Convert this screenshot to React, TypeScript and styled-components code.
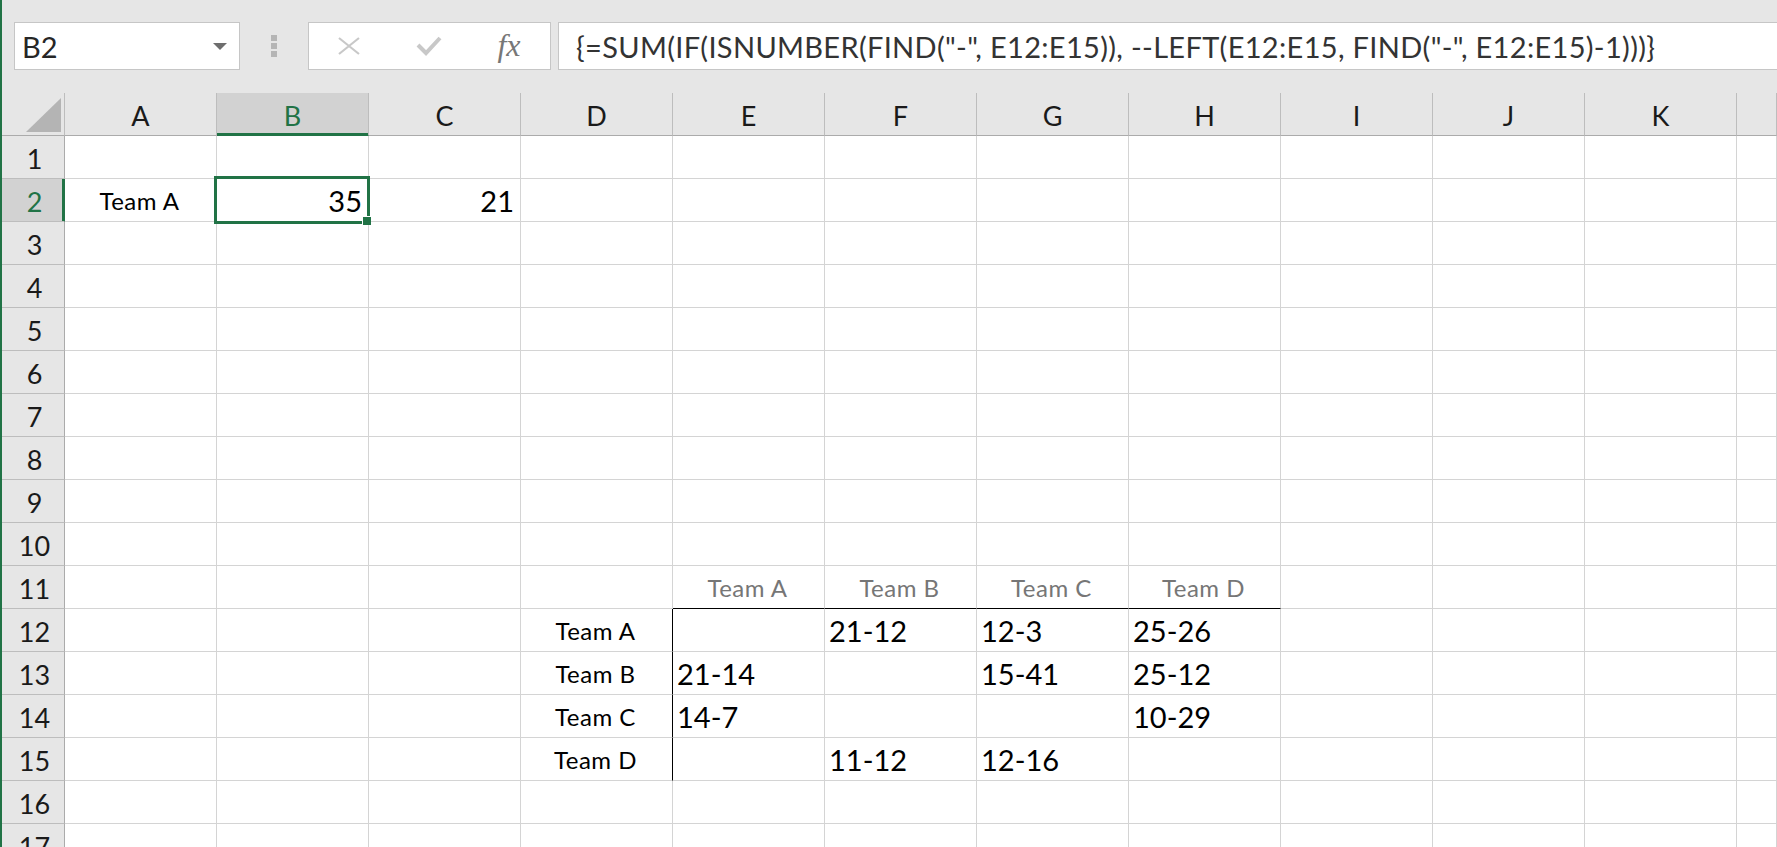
import React from "react";
import styled, { createGlobalStyle } from "styled-components";

const GREEN = "#217346";
const GRID_LINE = "#d4d4d4";

type Kind = "label" | "heading" | "number" | "score";

const COLUMNS = ["A", "B", "C", "D", "E", "F", "G", "H", "I", "J", "K"];
const ROWS = Array.from({ length: 17 }, (_, i) => i + 1);
const ACTIVE = { col: "B", row: 2 };

const CELLS: Record<string, { text: string; kind: Kind }> = {
    A2: { text: "Team A", kind: "label" },
    B2: { text: "35", kind: "number" },
    C2: { text: "21", kind: "number" },
    E11: { text: "Team A", kind: "heading" },
    F11: { text: "Team B", kind: "heading" },
    G11: { text: "Team C", kind: "heading" },
    H11: { text: "Team D", kind: "heading" },
    D12: { text: "Team A", kind: "label" },
    F12: { text: "21-12", kind: "score" },
    G12: { text: "12-3", kind: "score" },
    H12: { text: "25-26", kind: "score" },
    D13: { text: "Team B", kind: "label" },
    E13: { text: "21-14", kind: "score" },
    G13: { text: "15-41", kind: "score" },
    H13: { text: "25-12", kind: "score" },
    D14: { text: "Team C", kind: "label" },
    E14: { text: "14-7", kind: "score" },
    H14: { text: "10-29", kind: "score" },
    D15: { text: "Team D", kind: "label" },
    F15: { text: "11-12", kind: "score" },
    G15: { text: "12-16", kind: "score" },
};

// the results table has a thin black edge on its top and left side
const TABLE_LEFT_EDGE = new Set(["D12", "D13", "D14", "D15"]);
const TABLE_TOP_EDGE = new Set(["E11", "F11", "G11", "H11"]);

const FORMULA = '{=SUM(IF(ISNUMBER(FIND("-", E12:E15)), --LEFT(E12:E15, FIND("-", E12:E15)-1)))}';

const App: React.FunctionComponent = () => {
    return (
        <Frame>
            <GlobalStyle />
            <Toolbar>
                <NameBox>
                    <span>B2</span>
                    <Caret />
                </NameBox>
                <Grip>
                    <i />
                    <i />
                    <i />
                </Grip>
                <ButtonBox>
                    <ToolButton>
                        <svg width="22" height="18" viewBox="0 0 22 18">
                            <path d="M1 1 L21 17 M21 1 L1 17" stroke="#c8c8c8" strokeWidth="2.2" fill="none" />
                        </svg>
                    </ToolButton>
                    <ToolButton>
                        <svg width="26" height="20" viewBox="0 0 26 20">
                            <path d="M2 9 L10 17 L24 2" stroke="#c8c8c8" strokeWidth="4" fill="none" />
                        </svg>
                    </ToolButton>
                    <ToolButton>
                        <Fx>fx</Fx>
                    </ToolButton>
                </ButtonBox>
                <FormulaBox>{FORMULA}</FormulaBox>
            </Toolbar>

            <Sheet>
                <Corner>
                    <CornerMark />
                </Corner>
                {COLUMNS.map((col) => (
                    <ColumnHeader key={col} $active={col === ACTIVE.col}>
                        {col}
                    </ColumnHeader>
                ))}
                <ColumnHeader $active={false} />

                {ROWS.map((row) => (
                    <React.Fragment key={row}>
                        <RowHeader $active={row === ACTIVE.row}>{row}</RowHeader>
                        {COLUMNS.map((col) => {
                            const ref = `${col}${row}`;
                            const cell = CELLS[ref];
                            const isActive = col === ACTIVE.col && row === ACTIVE.row;
                            return (
                                <Cell
                                    key={ref}
                                    $kind={cell?.kind ?? "label"}
                                    $edgeRight={TABLE_LEFT_EDGE.has(ref)}
                                    $edgeBottom={TABLE_TOP_EDGE.has(ref)}
                                >
                                    {cell && <Value $kind={cell.kind}>{cell.text}</Value>}
                                    {isActive && (
                                        <>
                                            <Selection />
                                            <FillHandle />
                                        </>
                                    )}
                                </Cell>
                            );
                        })}
                        <Cell $kind="label" $edgeRight={false} $edgeBottom={false} />
                    </React.Fragment>
                ))}
            </Sheet>
        </Frame>
    );
};

const GlobalStyle = createGlobalStyle`
    html, body {
        margin: 0;
        padding: 0;
        background: #ffffff;
    }
    body {
        font-family: Lato, "Liberation Sans", sans-serif;
        overflow: hidden;
    }
`;

const Frame = styled.div`
    width: 1777px;
    height: 847px;
    overflow: hidden;
    box-sizing: border-box;
    border-left: 2px solid ${GREEN};
    background: #e6e6e6;
    display: flex;
    flex-direction: column;
`;

const Toolbar = styled.div`
    flex: none;
    height: 93px;
    box-sizing: border-box;
    padding: 22px 0 0 12px;
    display: flex;
    align-items: flex-start;
    overflow: hidden;
`;

const NameBox = styled.div`
    flex: none;
    width: 226px;
    height: 48px;
    box-sizing: border-box;
    background: #ffffff;
    border: 1px solid #c6c6c6;
    display: flex;
    align-items: center;
    padding: 0 12px 0 7px;
    font-size: 29px;
    color: #262626;
`;

const Caret = styled.span`
    margin-left: auto;
    width: 0;
    height: 0;
    border-left: 7.5px solid transparent;
    border-right: 7.5px solid transparent;
    border-top: 7px solid #6e6e6e;
`;

const Grip = styled.div`
    flex: none;
    margin: 13px 31px 0 31px;
    display: flex;
    flex-direction: column;
    gap: 2px;

    i {
        display: block;
        width: 6px;
        height: 6px;
        background: #b5b5b5;
    }
`;

const ButtonBox = styled.div`
    flex: none;
    width: 243px;
    height: 48px;
    box-sizing: border-box;
    background: #ffffff;
    border: 1px solid #c6c6c6;
    display: flex;
`;

const ToolButton = styled.div`
    width: 80px;
    display: flex;
    align-items: center;
    justify-content: center;
`;

const Fx = styled.span`
    font-family: "Liberation Serif", serif;
    font-style: italic;
    font-size: 32px;
    color: #777777;
    margin-top: -2px;
`;

const FormulaBox = styled.div`
    flex: 1;
    margin: 0 -20px 0 7px;
    height: 48px;
    box-sizing: border-box;
    background: #ffffff;
    border: 1px solid #c6c6c6;
    display: flex;
    align-items: center;
    padding-left: 17px;
    font-size: 29px;
    letter-spacing: 0.32px;
    color: #333333;
    white-space: nowrap;
`;

const Sheet = styled.div`
    flex: 1;
    display: grid;
    grid-template-columns: 63px repeat(11, 152px) 1fr;
    grid-auto-rows: 43px;
    background: #ffffff;
`;

const Corner = styled.div`
    box-sizing: border-box;
    background: #e6e6e6;
    border-right: 1px solid #bdbdbd;
    border-bottom: 1px solid #ababab;
    display: flex;
    align-items: flex-end;
    justify-content: flex-end;
    padding: 0 3px 3px 0;
`;

const CornerMark = styled.span`
    width: 35px;
    height: 34px;
    background: #b4b4b4;
    clip-path: polygon(100% 0, 100% 100%, 0 100%);
`;

const ColumnHeader = styled.div<{ $active: boolean }>`
    box-sizing: border-box;
    background: ${(p) => (p.$active ? "#d2d2d2" : "#e6e6e6")};
    border-right: 1px solid #bdbdbd;
    border-bottom: 1px solid ${(p) => (p.$active ? GREEN : "#ababab")};
    box-shadow: ${(p) => (p.$active ? `inset 0 -2px 0 ${GREEN}` : "none")};
    color: ${(p) => (p.$active ? GREEN : "#1a1a1a")};
    font-size: 27px;
    display: flex;
    align-items: flex-end;
    justify-content: center;
    padding-bottom: 3px;
`;

const RowHeader = styled.div<{ $active: boolean }>`
    box-sizing: border-box;
    background: ${(p) => (p.$active ? "#d2d2d2" : "#e6e6e6")};
    border-right: 1px solid ${(p) => (p.$active ? GREEN : "#ababab")};
    border-bottom: 1px solid #bdbdbd;
    box-shadow: ${(p) => (p.$active ? `inset -2px 0 0 ${GREEN}` : "none")};
    color: ${(p) => (p.$active ? GREEN : "#1a1a1a")};
    font-size: 27px;
    display: flex;
    align-items: flex-end;
    justify-content: center;
    padding: 0 0 3px 3px;
`;

const CELL_JUSTIFY: Record<Kind, string> = {
    label: "center",
    heading: "center",
    number: "flex-end",
    score: "flex-start",
};

const Cell = styled.div<{ $kind: Kind; $edgeRight: boolean; $edgeBottom: boolean }>`
    position: relative;
    box-sizing: border-box;
    border-right: 1px solid ${(p) => (p.$edgeRight ? "#000000" : GRID_LINE)};
    border-bottom: 1px solid ${(p) => (p.$edgeBottom ? "#000000" : GRID_LINE)};
    display: flex;
    align-items: flex-end;
    justify-content: ${(p) => CELL_JUSTIFY[p.$kind]};
    padding: 0 6px ${(p) => (p.$kind === "number" || p.$kind === "score" ? 3 : 6)}px 4px;
    white-space: nowrap;
`;

const Value = styled.span<{ $kind: Kind }>`
    font-size: ${(p) => (p.$kind === "number" || p.$kind === "score" ? 29 : 24)}px;
    letter-spacing: ${(p) => (p.$kind === "label" || p.$kind === "heading" ? 0.5 : 0)}px;
    color: ${(p) => (p.$kind === "heading" ? "#767676" : "#000000")};
`;

const Selection = styled.div`
    position: absolute;
    left: -3px;
    top: -3px;
    width: 156px;
    height: 48px;
    box-sizing: border-box;
    border: 3px solid ${GREEN};
    pointer-events: none;
    z-index: 2;
`;

const FillHandle = styled.div`
    position: absolute;
    left: 146px;
    top: 38px;
    width: 8px;
    height: 8px;
    background: ${GREEN};
    box-shadow: -1px -1px 0 #ffffff;
    z-index: 3;
`;

export default App;
